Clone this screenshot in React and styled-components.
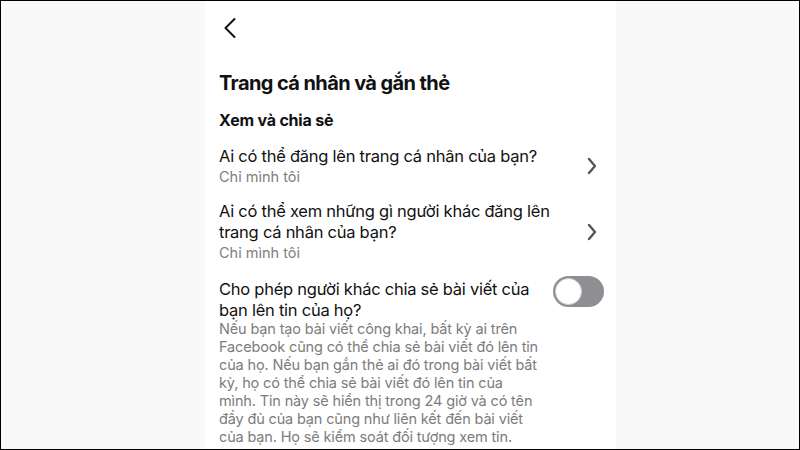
import React from 'react'
import styled, { createGlobalStyle } from 'styled-components';

const GlobalStyle = createGlobalStyle`
  html, body {
    margin: 0;
    padding: 0;
  }
  body {
    font-family: Inter, "Noto Sans", sans-serif;
    -webkit-font-smoothing: antialiased;
  }
`;

const ChevronLeft = () => (
  <svg width="14" height="22" viewBox="0 0 14 22" fill="none">
    <path d="M11.5 2 L2.5 11 L11.5 20" stroke="#111" strokeWidth="2" strokeLinecap="round" strokeLinejoin="round" />
  </svg>
);

const ChevronRight = () => (
  <svg width="10" height="18" viewBox="0 0 10 18" fill="none">
    <path d="M2 2 L8 9 L2 16" stroke="#555" strokeWidth="2.4" strokeLinecap="round" strokeLinejoin="round" />
  </svg>
);

const App = () => {
  return (
    <>
      <GlobalStyle />
      <Frame>
        <Side $left />
        <Panel>
          <BackButton><ChevronLeft /></BackButton>
          <Title>Trang cá nhân và gắn thẻ</Title>
          <Section>Xem và chia sẻ</Section>

          <Row $gap={16}>
            <RowText>
              <Label>Ai có thể đăng lên trang cá nhân của bạn?</Label>
              <Value>Chỉ mình tôi</Value>
            </RowText>
            <Action><ChevronRight /></Action>
          </Row>

          <Row $gap={15}>
            <RowText>
              <Label>Ai có thể xem những gì người khác đăng lên<br />trang cá nhân của bạn?</Label>
              <Value>Chỉ mình tôi</Value>
            </RowText>
            <Action><ChevronRight /></Action>
          </Row>

          <Row $gap={17} $top>
            <RowText>
              <Label>Cho phép người khác chia sẻ bài viết của<br />bạn lên tin của họ?</Label>
              <Description>
                Nếu bạn tạo bài viết công khai, bất kỳ ai trên<br />
                Facebook cũng có thể chia sẻ bài viết đó lên tin<br />
                của họ. Nếu bạn gắn thẻ ai đó trong bài viết bất<br />
                kỳ, họ có thể chia sẻ bài viết đó lên tin của<br />
                mình. Tin này sẽ hiển thị trong 24 giờ và có tên<br />
                đầy đủ của bạn cũng như liên kết đến bài viết<br />
                của bạn. Họ sẽ kiểm soát đối tượng xem tin.
              </Description>
            </RowText>
            <Toggle>
              <Knob />
            </Toggle>
          </Row>
        </Panel>
        <Side />
      </Frame>
    </>
  )
}

const Frame = styled.div`
  box-sizing: border-box;
  width: 800px;
  height: 450px;
  border: 1px solid #000;
  display: flex;
  overflow: hidden;
  background: #f9f9f9;
`;

const Side = styled.div`
  flex: ${p => (p.$left ? '0 0 204px' : '1')};
`;

const Panel = styled.div`
  width: 411px;
  flex: none;
  background: #fff;
  padding: 15px 0 0 14px;
  box-sizing: border-box;
  color: #111;
`;

const BackButton = styled.div`
  height: 24px;
  display: flex;
  align-items: center;
  margin-left: 4px;
`;

const Title = styled.h1`
  margin: 30px 0 0;
  font-size: 20px;
  line-height: 26px;
  font-weight: 700;
  letter-spacing: -0.6px;
`;

const Section = styled.h2`
  margin: 14px 0 0;
  font-size: 16px;
  line-height: 20px;
  font-weight: 700;
  letter-spacing: -0.2px;
`;

const Row = styled.div`
  display: flex;
  align-items: ${p => (p.$top ? 'flex-start' : 'center')};
  justify-content: space-between;
  margin-top: ${p => p.$gap}px;
  padding-right: 12px;
`;

const RowText = styled.div`
  display: flex;
  flex-direction: column;
`;

const Label = styled.div`
  font-size: 16.5px;
  line-height: 21px;
  letter-spacing: -0.25px;
  color: #111;
`;

const Value = styled.div`
  font-size: 14.5px;
  line-height: 19px;
  color: #808080;
`;

const Description = styled.div`
  font-size: 14.5px;
  line-height: 18px;
  letter-spacing: -0.15px;
  color: #7c7c7c;
  margin-top: -1px;
`;

const Action = styled.div`
  width: 20px;
  display: flex;
  justify-content: center;
  margin-right: 2px;
`;

const Toggle = styled.div`
  width: 51px;
  height: 31px;
  border-radius: 16px;
  background: #8e8e93;
  flex: none;
  margin-top: -3px;
  position: relative;
`;

const Knob = styled.div`
  position: absolute;
  top: 2px;
  left: 2px;
  width: 27px;
  height: 27px;
  box-sizing: border-box;
  border-radius: 50%;
  background: #fff;
  border: 1px solid #d0d0d0;
`;

export default App;
